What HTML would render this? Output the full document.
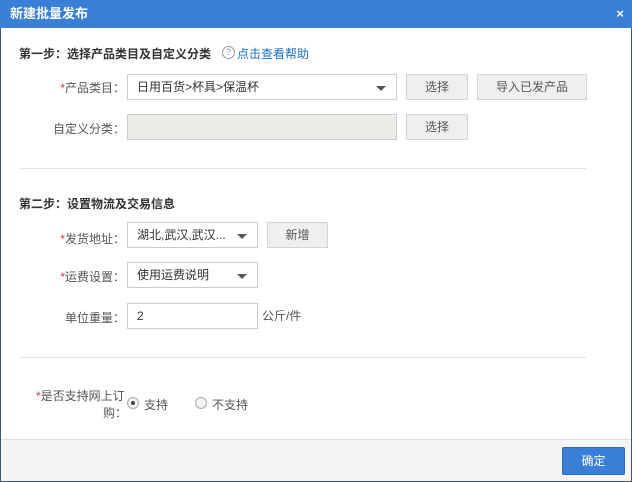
<!DOCTYPE html>
<html><head><meta charset="utf-8"><style>
*{margin:0;padding:0;box-sizing:border-box}
body{width:632px;height:482px;overflow:hidden;background:#fff;font-family:"Liberation Sans","Noto Sans CJK SC",sans-serif;font-size:12px;color:#333;position:relative}
.frame{position:absolute;left:0;top:0;width:632px;height:482px;border:1px solid #3b5a7a}
.title{position:absolute;left:0;top:0;width:632px;height:28px;background:#3a7fd6;color:#fff;font-weight:bold;font-size:13px;line-height:28px;padding-left:10px}
.x{position:absolute;right:8px;top:0;color:#fff;font-weight:bold;font-size:13px;line-height:28px}
.a{position:absolute;white-space:nowrap}
.h{font-weight:bold;color:#333}
.lbl{text-align:right;width:110px;left:15px;color:#555}
.star{color:#e33}
.box{position:absolute;border:1px solid #ccc;background:#fff;height:26px;line-height:24px;padding-left:9px;color:#333}
.arr{position:absolute;right:10px;top:11px;border-left:5px solid transparent;border-right:5px solid transparent;border-top:5px solid #555}
.btn{position:absolute;border:1px solid #d4d4d4;background:#efefef;height:26px;line-height:24px;text-align:center;color:#555}
.hr{position:absolute;left:19px;width:567px;height:1px;background:#e2e2e2}
.radio{position:absolute;width:12px;height:12px;border:1px solid #aaa;border-radius:50%;background:#f2f2f2}
.foot{position:absolute;left:1px;top:439px;width:630px;height:42px;background:#f5f5f5;border-top:1px solid #ddd}
</style></head><body>
<div class="frame"></div>
<div class="title">新建批量发布<span class="x">×</span></div>
<div class="a h" style="left:19px;top:45px">第一步：选择产品类目及自定义分类</div>
<div class="a" style="left:222px;top:46px;width:13px;height:13px;border:1px solid #999;border-radius:50%;font-size:9px;line-height:11px;text-align:center;color:#999">?</div>
<div class="a" style="left:237px;top:45px;color:#1a6fc9">点击查看帮助</div>
<div class="a lbl" style="top:79px"><span class="star">*</span>产品类目：</div>
<div class="box" style="left:127px;top:74px;width:270px">日用百货&gt;杯具&gt;保温杯<span class="arr"></span></div>
<div class="btn" style="left:406px;top:74px;width:62px">选择</div>
<div class="btn" style="left:477px;top:74px;width:110px">导入已发产品</div>
<div class="a lbl" style="top:120px">自定义分类：</div>
<div class="box" style="left:127px;top:114px;width:270px;background:#ecebe6"></div>
<div class="btn" style="left:406px;top:114px;width:62px">选择</div>
<div class="hr" style="top:168px"></div>
<div class="a h" style="left:19px;top:195px">第二步：设置物流及交易信息</div>
<div class="a lbl" style="top:230px"><span class="star">*</span>发货地址：</div>
<div class="box" style="left:127px;top:222px;width:131px">湖北,武汉,武汉...<span class="arr"></span></div>
<div class="btn" style="left:267px;top:222px;width:61px">新增</div>
<div class="a lbl" style="top:268px"><span class="star">*</span>运费设置：</div>
<div class="box" style="left:127px;top:262px;width:131px">使用运费说明<span class="arr"></span></div>
<div class="a lbl" style="top:309px">单位重量：</div>
<div class="box" style="left:127px;top:303px;width:131px">2</div>
<div class="a" style="left:262px;top:307px;color:#555">公斤/件</div>
<div class="hr" style="top:357px"></div>
<div class="a" style="left:36px;top:387px;color:#555"><span class="star">*</span>是否支持网上订</div>
<div class="a" style="left:103px;top:404px;color:#555">购：</div>
<div class="radio" style="left:127px;top:397px"><div style="position:absolute;left:3px;top:3px;width:4px;height:4px;border-radius:50%;background:#444"></div></div>
<div class="a" style="left:144px;top:396px;color:#555">支持</div>
<div class="radio" style="left:195px;top:397px"></div>
<div class="a" style="left:212px;top:396px;color:#555">不支持</div>
<div class="foot"></div>
<div class="a" style="left:562px;top:447px;width:63px;height:28px;background:#3a7fd6;border:1px solid #2f6cb8;border-radius:2px;color:#fff;text-align:center;line-height:26px">确定</div>
</body></html>
